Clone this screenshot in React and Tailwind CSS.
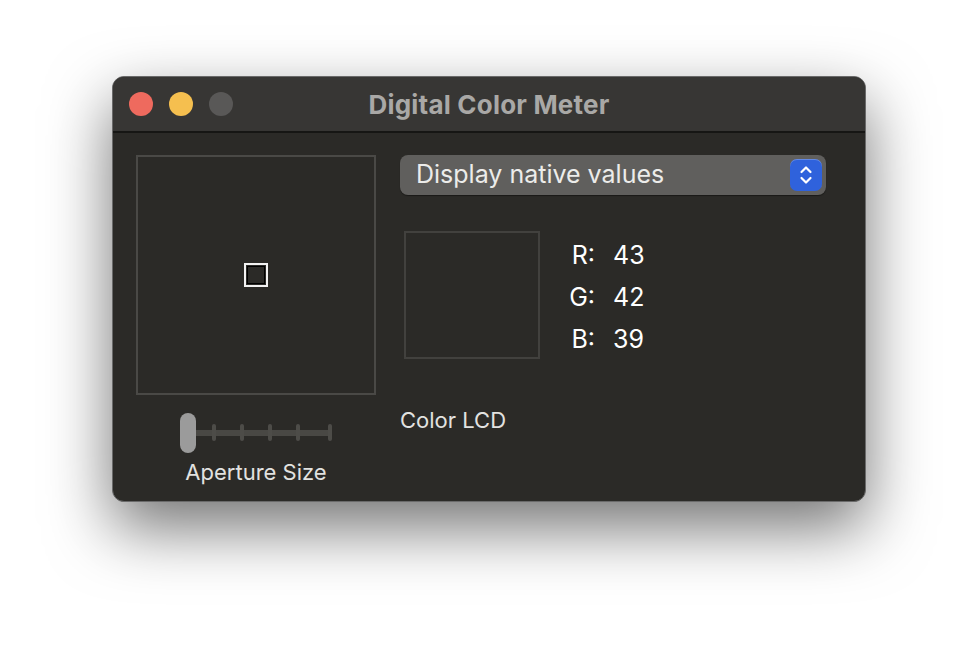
import React from 'react';

// Traffic light button
const Light = ({ color }) => (
  <div className={`h-[24px] w-[24px] rounded-full ${color}`} />
);

// Blue up/down stepper on popup button
const Stepper = () => (
  <div className="flex h-[32px] w-[32px] items-center justify-center rounded-[7px] bg-[#2f62dc] shadow-[inset_0_1px_0_rgba(255,255,255,0.25)]">
    <svg width="16" height="24" viewBox="0 0 16 24" fill="none" stroke="white" strokeWidth="2.2" strokeLinecap="round" strokeLinejoin="round">
      <path d="M3.5 9 L8 4.5 L12.5 9" />
      <path d="M3.5 15 L8 19.5 L12.5 15" />
    </svg>
  </div>
);

const ApertureSlider = () => {
  const ticks = ['left-[32px]', 'left-[60px]', 'left-[88px]', 'left-[116px]', 'left-[148px]'];
  return (
    <div className="relative mt-[18px] h-[40px] w-[152px]">
      <div className="absolute left-[14px] right-0 top-[17px] h-[6px] bg-[#494844]" />
      {ticks.map((pos) => (
        <div key={pos} className={`absolute top-[11px] h-[17px] w-[4px] rounded-full bg-[#4d4c48] ${pos}`} />
      ))}
      <div className="absolute left-0 top-0 h-[40px] w-[16px] rounded-full bg-[#9b9b9b]" />
    </div>
  );
};

export default function App() {
  const rows = [
    ['R:', '43'],
    ['G:', '42'],
    ['B:', '39'],
  ];

  return (
    <div
      className="min-h-[650px] w-full bg-white pl-[112px] pt-[76px]"
      style={{ fontFamily: 'Inter, "Noto Sans", "Liberation Sans", sans-serif' }}
    >
      <div className="h-[426px] w-[754px] overflow-hidden rounded-[12px] border border-[#6a6a6a] bg-[#2b2a27] shadow-[0_26px_64px_rgba(0,0,0,0.55)]">
        {/* title bar */}
        <div className="relative flex h-[56px] items-center border-b-2 border-[#161614] bg-[#373634] px-[16px]">
          <div className="flex gap-[16px]">
            <Light color="bg-[#ee6a5e]" />
            <Light color="bg-[#f5bf4f]" />
            <Light color="bg-[#595857]" />
          </div>
          <div className="absolute inset-0 flex items-center justify-center text-[26px] font-bold tracking-[0.2px] text-[#a9a8a6]">
            Digital Color Meter
          </div>
        </div>

        {/* body */}
        <div className="flex gap-[24px] pl-[23px] pt-[22px]">
          <div className="flex w-[240px] flex-col items-center">
            <div className="flex h-[240px] w-[240px] items-center justify-center border-2 border-[#4a4946]">
              <div className="h-[24px] w-[24px] border-2 border-[#f2f2f2] bg-[#2b2a27] outline outline-1 outline-offset-[-4px] outline-black" />
            </div>
            <ApertureSlider />
            <div className="mt-[4px] text-[22px] leading-[30px] text-[#e2e2e0]">Aperture Size</div>
          </div>

          <div className="flex w-[426px] flex-col">
            <div className="flex h-[40px] items-center justify-between rounded-[8px] bg-[#605f5d] pl-[16px] pr-[4px] shadow-[0_1px_1px_rgba(0,0,0,0.4)]">
              <span className="text-[25px] text-[#ececea]">Display native values</span>
              <Stepper />
            </div>

            <div className="mt-[36px] flex items-start pl-[4px]">
              <div className="h-[128px] w-[136px] border-2 border-[#42413e]" />
              <div className="ml-[27px] mt-[4px] flex flex-col">
                {rows.map(([label, value]) => (
                  <div key={label} className="flex h-[42px] items-center text-[25px] text-white">
                    <span className="w-[28px] text-right">{label}</span>
                    <span className="ml-[18px]">{value}</span>
                  </div>
                ))}
              </div>
            </div>

            <div className="mt-[44px] text-[22px] leading-[30px] text-[#e2e2e0]">Color LCD</div>
          </div>
        </div>
      </div>
    </div>
  );
}
